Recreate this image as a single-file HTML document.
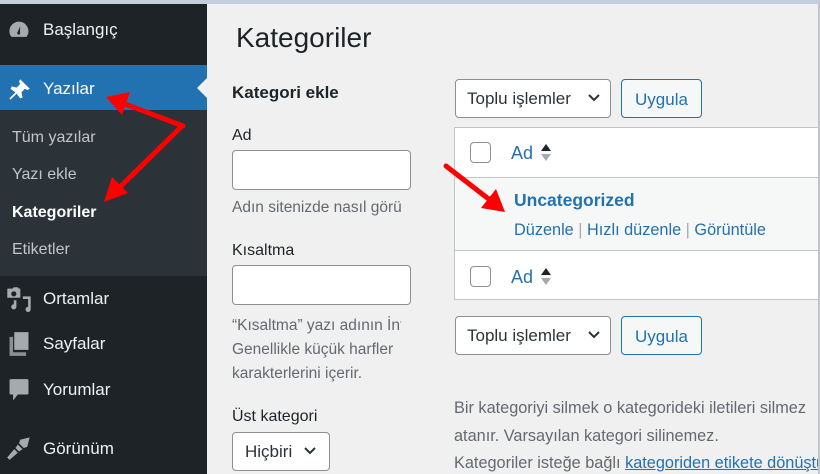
<!DOCTYPE html>
<html><head><meta charset="utf-8"><style>
*{margin:0;padding:0;box-sizing:border-box}
body{width:820px;height:474px;overflow:hidden;background:#f0f0f1;font-family:"Liberation Sans",sans-serif;position:relative;color:#1d2327}
.a{position:absolute;white-space:nowrap}
#top{position:absolute;left:0;top:0;width:820px;height:4px;background:#c5cfdc}
#side{position:absolute;left:0;top:4px;width:207px;height:470px;background:#1d2327}
.m{position:absolute;left:43px;font-size:17px;color:#f0f0f1}
.s{position:absolute;left:12px;font-size:16px;color:#c3c4c7}
.inp{position:absolute;background:#fff;border:1px solid #8c8f94;border-radius:4px}
.lbl{font-size:16px;color:#1d2327}
.hint{font-size:15.5px;color:#646970}
.btn{position:absolute;border-radius:4px;font-size:17px}
.sel{background:#fff;border:1px solid #8c8f94;color:#2c3338}
.ap{background:#f6f7f7;border:1px solid #2271b1;color:#2271b1;text-align:center}
.cb{position:absolute;left:470px;width:21px;height:21px;border:1px solid #8c8f94;border-radius:4px;background:#fff}
.blue{color:#2271b1}
</style></head><body>
<div id="top"></div>
<div id="side">
 <div style="position:absolute;top:61px;left:0;width:207px;height:45px;background:#2271b1"></div>
 <div style="position:absolute;top:106px;left:0;width:207px;height:166px;background:#2c3338"></div>
 <div style="position:absolute;left:197px;top:74px;width:0;height:0;border-top:10px solid transparent;border-bottom:10px solid transparent;border-right:10px solid #f0f0f1"></div>
</div>
<svg class="a" style="left:7px;top:18px" width="24" height="24" viewBox="0 0 20 20"><path fill="#a7aaad" d="M10 3a8 8 0 0 0-8 8c0 2 .7 3.5 1.7 4.7h12.6A8 8 0 0 0 10 3zm0 11a1.5 1.5 0 0 1-1-2.6L11 7l-.2 5A1.5 1.5 0 0 1 10 14z"/></svg>
<div class="m" style="top:20px">Başlangıç</div>
<svg class="a" style="left:7px;top:78px" width="24" height="24" viewBox="0 0 20 20"><path fill="#fff" d="M11 1l8 8-2 1-2-1-3 3 1 4-2 1-3-4-5 5-1-1 5-5-4-3 1-2 4 1 3-3-1-2z"/></svg>
<div class="m" style="top:79px;color:#fff">Yazılar</div>
<div class="s" style="top:129px">Tüm yazılar</div>
<div class="s" style="top:166px">Yazı ekle</div>
<div class="s" style="top:204px;color:#fff;font-weight:bold">Kategoriler</div>
<div class="s" style="top:241px">Etiketler</div>
<svg class="a" style="left:6px;top:286px" width="26" height="26" viewBox="0 0 20 20"><path fill="#a7aaad" d="M1 2h4l1-1h3l1 1h1v7H1zM6 4a2 2 0 1 0 0 4 2 2 0 0 0 0-4zM13 8h6v10a2 2 0 1 1-2-2V10h-4zM8 11v5a2 2 0 1 1-2-2v-3z"/></svg>
<div class="m" style="top:289px">Ortamlar</div>
<svg class="a" style="left:8px;top:331px" width="22" height="26" viewBox="0 0 18 22"><path fill="#a7aaad" d="M5 1h12v15H5z"/><path fill="#8c8f94" d="M1 5h3v13h11v3H1z"/></svg>
<div class="m" style="top:334px">Sayfalar</div>
<svg class="a" style="left:8px;top:378px" width="22" height="26" viewBox="0 0 18 22"><path fill="#a7aaad" d="M2 1h14a1 1 0 0 1 1 1v11a1 1 0 0 1-1 1H8l-4 5v-5H2a1 1 0 0 1-1-1V2a1 1 0 0 1 1-1z"/></svg>
<div class="m" style="top:380px">Yorumlar</div>
<svg class="a" style="left:6px;top:436px" width="26" height="24" viewBox="0 0 22 20"><path fill="#a7aaad" d="M12 3l8-2-2 8-3 1-4-4zM10 7l4 4-3 2-3-3zM7 11l3 3-7 6-2-2z"/></svg>
<div class="m" style="top:439px">Görünüm</div>

<div class="a" style="left:236px;top:22px;font-size:28px;color:#1d2327">Kategoriler</div>
<div class="a" style="left:232px;top:83px;font-size:17px;font-weight:bold">Kategori ekle</div>
<div class="a lbl" style="left:232px;top:127px">Ad</div>
<div class="inp" style="left:232px;top:150px;width:179px;height:40px"></div>
<div class="a hint" style="left:232px;top:199px;width:169px;overflow:hidden">Adın sitenizde nasıl görüneceği</div>
<div class="a lbl" style="left:232px;top:242px">Kısaltma</div>
<div class="inp" style="left:232px;top:265px;width:179px;height:40px"></div>
<div class="a hint" style="left:232px;top:314px;width:169px;overflow:hidden;line-height:24px">“Kısaltma” yazı adının İnternet<br>Genellikle küçük harfler<br>karakterlerini içerir.</div>
<div class="a lbl" style="left:232px;top:408px">Üst kategori</div>
<div class="btn sel" style="left:232px;top:432px;width:98px;height:39px;padding:9px 0 0 12px">Hiçbiri</div>
<svg class="a" style="left:304px;top:447px" width="12" height="8"><path d="M1 1l5 5 5-5" stroke="#2c3338" stroke-width="2" fill="none"/></svg>

<div class="btn sel" style="left:455px;top:79px;width:156px;height:39px;padding:9px 0 0 11px">Toplu işlemler</div>
<svg class="a" style="left:588px;top:94px" width="12" height="8"><path d="M1 1l5 5 5-5" stroke="#2c3338" stroke-width="2" fill="none"/></svg>
<div class="btn ap" style="left:621px;top:79px;width:81px;height:39px;padding-top:10px">Uygula</div>

<div class="a" style="left:454px;top:127px;width:370px;height:173px;background:#fff;border:1px solid #c3c4c7"></div>
<div class="a" style="left:455px;top:177px;width:365px;height:74px;background:#f6f7f7;border-top:1px solid #c3c4c7;border-bottom:1px solid #c3c4c7"></div>
<div class="cb" style="top:142px"></div>
<div class="a blue" style="left:511px;top:143px;font-size:18px">Ad</div>
<svg class="a" style="left:540px;top:143px" width="12" height="20"><path d="M1 8L6 1l5 7z" fill="#1d2327"/><path d="M1 11l5 7 5-7z" fill="#a7aaad"/></svg>
<div class="a blue" style="left:514px;top:190px;font-size:17.5px;font-weight:bold;color:#2271b1">Uncategorized</div>
<div class="a blue" style="left:514px;top:221px;font-size:16.3px">Düzenle <span style="color:#a7aaad">|</span> Hızlı düzenle <span style="color:#a7aaad">|</span> Görüntüle</div>
<div class="cb" style="top:266px"></div>
<div class="a blue" style="left:511px;top:267px;font-size:18px">Ad</div>
<svg class="a" style="left:540px;top:267px" width="12" height="20"><path d="M1 8L6 1l5 7z" fill="#1d2327"/><path d="M1 11l5 7 5-7z" fill="#a7aaad"/></svg>

<div class="btn sel" style="left:455px;top:316px;width:156px;height:39px;padding:9px 0 0 11px">Toplu işlemler</div>
<svg class="a" style="left:588px;top:331px" width="12" height="8"><path d="M1 1l5 5 5-5" stroke="#2c3338" stroke-width="2" fill="none"/></svg>
<div class="btn ap" style="left:621px;top:316px;width:81px;height:39px;padding-top:10px">Uygula</div>

<div class="a hint" style="left:454px;top:394px;line-height:28px;font-size:16.3px">Bir kategoriyi silmek o kategorideki iletileri silmez<br>atanır. Varsayılan kategori silinemez.</div>
<div class="a hint" style="left:454px;top:454px;font-size:16.3px">Kategoriler isteğe bağlı <span style="color:#2271b1;text-decoration:underline">kategoriden etikete dönüştürücü</span></div>
<div class="a" style="left:818px;top:4px;width:2px;height:470px;background:#c3c4c7"></div>

<svg class="a" style="left:0;top:0" width="820" height="474">
<g stroke="#f00" stroke-width="5" fill="#f00" stroke-linecap="round">
<line x1="183" y1="126" x2="125" y2="104"/>
<line x1="180" y1="128" x2="120" y2="187"/>
<line x1="446" y1="166" x2="490" y2="200"/>
</g>
<g fill="#f00">
<path d="M106 97L130 92L122 115z"/>
<path d="M104 202L112 177L128 193z"/>
<path d="M505 212L481 208L496 189z"/>
</g>
</svg>
</body></html>
